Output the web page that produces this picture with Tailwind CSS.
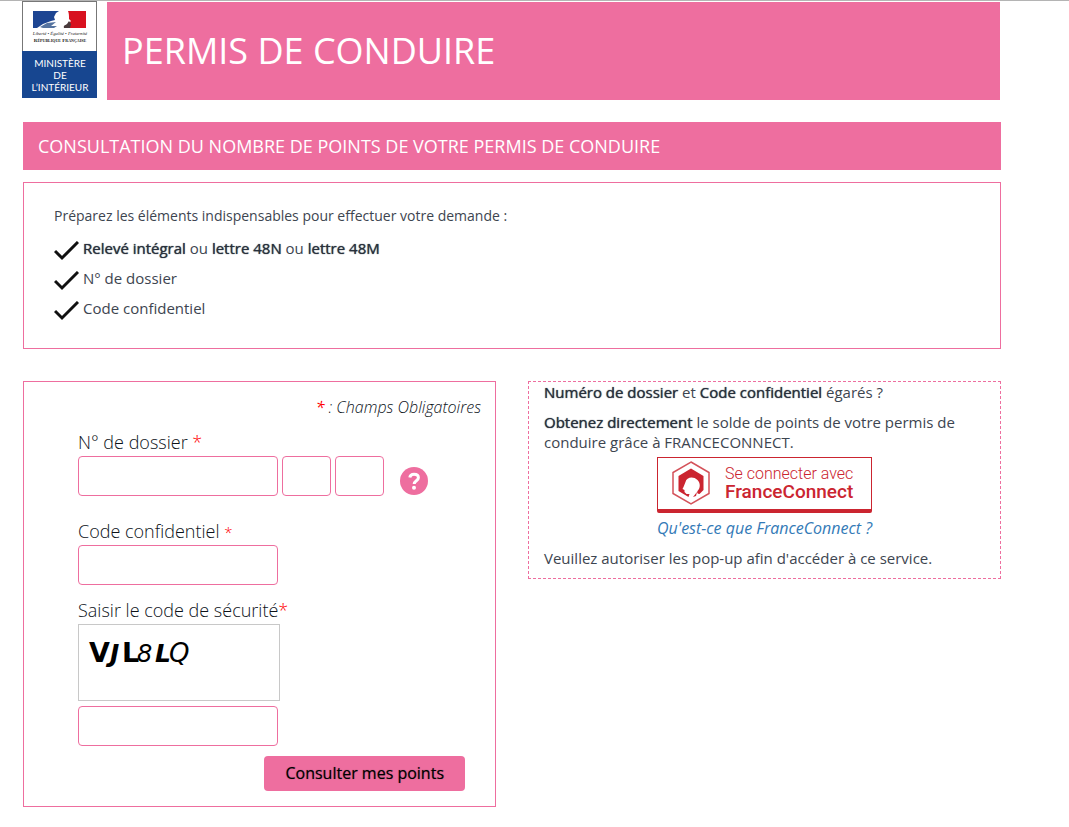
<!DOCTYPE html>
<html lang="fr">
<head>
<meta charset="utf-8">
<meta name="viewport" content="width=device-width, initial-scale=1">
<title>Permis de conduire - Consultation du nombre de points</title>
<script src="https://cdn.jsdelivr.net/npm/@tailwindcss/browser@4"></script>
</head>
<body class="bg-white border-t border-[#b4b4b4] pb-5 font-['Open_Sans',sans-serif] font-normal text-[15px] leading-5 text-[#3d4550]">
<div class="ml-[23px] mr-17">

  <header class="flex gap-[10px] -ml-px mr-px">
    <svg class="w-[75px] h-[97px] shrink-0" viewBox="0 0 75 97" role="img" aria-label="République Française, Ministère de l'Intérieur">
      <rect x=".5" y=".5" width="74" height="96" fill="#fff" stroke="#777"/>
      <rect x="0" y="50" width="75" height="47" fill="#174690"/>
      <path d="M11 10h26l-3 2-2 4 1 3-4 1-8 3-6 4h-4z" fill="#1d4592"/>
      <path d="M11 27V10h6v14z" fill="#1d4592"/>
      <path d="M18 26l7-4 9-1-5 4 6 0-3 2H21z" fill="#55739f"/>
      <path d="M46 10h18v17H45c-1-2 2-3 2-5l2-2-2-2c0-3 0-6-1-8z" fill="#d8111f"/>
      <path d="M42 27c-1-3 2-3 3-4l2-3 2 3-1 4z" fill="#4a3a3c"/>
      <text x="38" y="34" text-anchor="middle" font-family="Liberation Serif, serif" font-style="italic" font-weight="400" font-size="4.700" fill="#222">Liberté • Égalité • Fraternité</text>
      <text x="38" y="41" text-anchor="middle" font-family="Liberation Serif, serif" font-weight="700" font-size="5" fill="#222">R<tspan font-size="4">ÉPUBLIQUE</tspan> F<tspan font-size="4">RANÇAISE</tspan></text>
      <g fill="#fff" font-family="Lato, sans-serif" font-weight="400" font-size="10" text-anchor="middle">
        <text x="38" y="66">MINISTÈRE</text>
        <text x="38" y="78">DE</text>
        <text x="38" y="90">L’INTÉRIEUR</text>
      </g>
    </svg>
    <div class="mt-px flex h-[98px] flex-1 items-center bg-[#ee6e9f] pl-[15px]">
      <h1 class="text-4xl font-normal text-white">PERMIS DE CONDUIRE</h1>
    </div>
  </header>

  <h2 class="mt-[22px] flex h-12 items-center bg-[#ee6e9f] px-[15px] text-lg font-normal text-white">CONSULTATION DU NOMBRE DE POINTS DE VOTRE PERMIS DE CONDUIRE</h2>

  <section class="mt-3 border border-[#ee6e9f] px-[30px] pt-[23px] pb-[25px]">
    <p class="text-sm">Préparez les éléments indispensables pour effectuer votre demande :</p>
    <ul class="mt-[7px]">
      <li class="flex h-[30px] items-center gap-1"><svg class="mt-1.5 h-5 w-[25px]" viewBox="0 0 25 20" fill="none" stroke="#111" stroke-width="3"><path d="M1 10l7 7L24 1"/></svg><span><b class="font-medium text-[#28303c] text-shadow-[0_0_1px_#28303c]">Relevé intégral</b> ou <b class="font-medium text-[#28303c] text-shadow-[0_0_1px_#28303c]">lettre 48N</b> ou <b class="font-medium text-[#28303c] text-shadow-[0_0_1px_#28303c]">lettre 48M</b></span></li>
      <li class="flex h-[30px] items-center gap-1"><svg class="mt-1.5 h-5 w-[25px]" viewBox="0 0 25 20" fill="none" stroke="#111" stroke-width="3"><path d="M1 10l7 7L24 1"/></svg><span>N° de dossier</span></li>
      <li class="flex h-[30px] items-center gap-1"><svg class="mt-1.5 h-5 w-[25px]" viewBox="0 0 25 20" fill="none" stroke="#111" stroke-width="3"><path d="M1 10l7 7L24 1"/></svg><span>Code confidentiel</span></li>
    </ul>
  </section>

  <div class="mt-8 grid grid-cols-2 items-start gap-8">
    <form class="border border-[#ee6e9f] pt-[15px] pb-[15px] pl-[54px]">
      <p class="pr-[14px] text-right text-base leading-5 font-light text-[#0c1219] italic"><span class="font-normal text-[#f00]">*</span> : Champs Obligatoires</p>

      <label for="dossier" class="mt-[11px] block text-lg leading-7 font-light text-[#0c1219]">N° de dossier <span class="text-[#f00]">*</span></label>
      <div class="flex gap-1">
        <input id="dossier" type="text" class="h-10 w-[200px] rounded border border-[#ee6e9f] px-3">
        <input type="text" aria-label="N° de dossier, deuxième partie" class="h-10 w-[49px] rounded border border-[#ee6e9f] px-3">
        <input type="text" aria-label="N° de dossier, troisième partie" class="h-10 w-[49px] rounded border border-[#ee6e9f] px-3">
        <button type="button" aria-label="Aide" class="ml-3 self-end pb-px">
          <svg class="size-7" viewBox="0 0 28 28"><circle cx="14" cy="14" r="14" fill="#ee6e9f"/><path d="M9.800 10.600C10.200 8.200 12 7.300 14 7.300c2.600 0 4.400 1.300 4.400 3.400 0 3-4.200 3-4.200 6.300" fill="none" stroke="#fff" stroke-width="3"/><circle cx="14" cy="20.800" r="2" fill="#fff"/></svg>
        </button>
      </div>

      <label for="code" class="mt-[21px] block text-lg leading-7 font-light text-[#0c1219]">Code confidentiel <span class="text-[15px] leading-none text-[#f00]">*</span></label>
      <input id="code" type="text" class="block h-10 w-[200px] rounded border border-[#ee6e9f] px-3">

      <label for="captcha" class="mt-[11px] block text-lg leading-7 font-light text-[#0c1219]">Saisir le code de sécurité<span class="text-[#f00]">*</span></label>
      <div class="h-[77px] w-[202px] border border-[#c8c8c8]">
        <svg class="h-[75px] w-[200px]" viewBox="0 0 200 75" font-family="DejaVu Sans, sans-serif" font-size="27" fill="#000" role="img" aria-label="Code de sécurité">
          <text y="37"><tspan x="10" font-weight="700">V</tspan><tspan x="31" font-weight="700" font-style="italic" font-size="25">J</tspan><tspan x="43" font-weight="700">L</tspan><tspan x="58" font-style="italic" font-size="24">8</tspan><tspan x="76" font-weight="700" font-style="italic" font-size="25">L</tspan><tspan x="90" font-style="italic" font-size="26">Q</tspan></text>
        </svg>
      </div>
      <input id="captcha" type="text" class="mt-[5px] block h-10 w-[200px] rounded border border-[#ee6e9f] px-3">

      <div class="mt-[10px] flex justify-end pr-[30px]">
        <button type="submit" class="h-[35px] rounded bg-[#ee6e9f] px-[21px] pb-0.5 text-base font-medium text-black text-shadow-[0_0_1px_#00000080]">Consulter mes points</button>
      </div>
    </form>

    <aside class="border border-dashed border-[#ee6e9f] px-[15px] pb-[10px]">
      <p><b class="font-medium text-[#28303c] text-shadow-[0_0_1px_#28303c]">Numéro de dossier</b> et <b class="font-medium text-[#28303c] text-shadow-[0_0_1px_#28303c]">Code confidentiel</b> égarés ?</p>
      <p class="mt-[10px]"><b class="font-medium text-[#28303c] text-shadow-[0_0_1px_#28303c]">Obtenez directement</b> le solde de points de votre permis de conduire grâce à FRANCECONNECT.</p>
      <div class="mt-[5px] flex flex-col items-center">
        <button type="button" class="flex h-14 w-[215px] items-center gap-[15px] rounded-b-xs border border-b-4 border-[#cb2530] pb-0.5 pl-[14px] text-left font-['Roboto',sans-serif] text-[#cb2530]">
          <svg class="h-11 w-[38px] shrink-0" viewBox="0 0 38 44" fill="none"><path d="M19 1L37 11.500v21L19 43 1 32.500v-21z" stroke="#d4525a" stroke-width="1.500"/><path d="M19 7.500L31.500 15v14l-4 4c-2 0-3-1-2-3 3-3 3-8 0-11-4-4-11-3-12 2l-2 5-1 2 2 1v2l2 2 3 0-1 3-10-6V15z" fill="#cb2530"/><path d="M21 36l4-5-1 4z" fill="#cb2530"/></svg>
          <span class="block"><span class="block text-base leading-[18px] font-light">Se connecter avec</span><span class="block text-[19px] leading-[18px] font-medium">FranceConnect</span></span>
        </button>
        <a href="#" class="mt-[5px] text-base leading-5 text-[#337ab7] italic">Qu'est-ce que FranceConnect ?</a>
      </div>
      <p class="mt-[10px]">Veuillez autoriser les pop-up afin d'accéder à ce service.</p>
    </aside>
  </div>
</div>
</body>
</html>
